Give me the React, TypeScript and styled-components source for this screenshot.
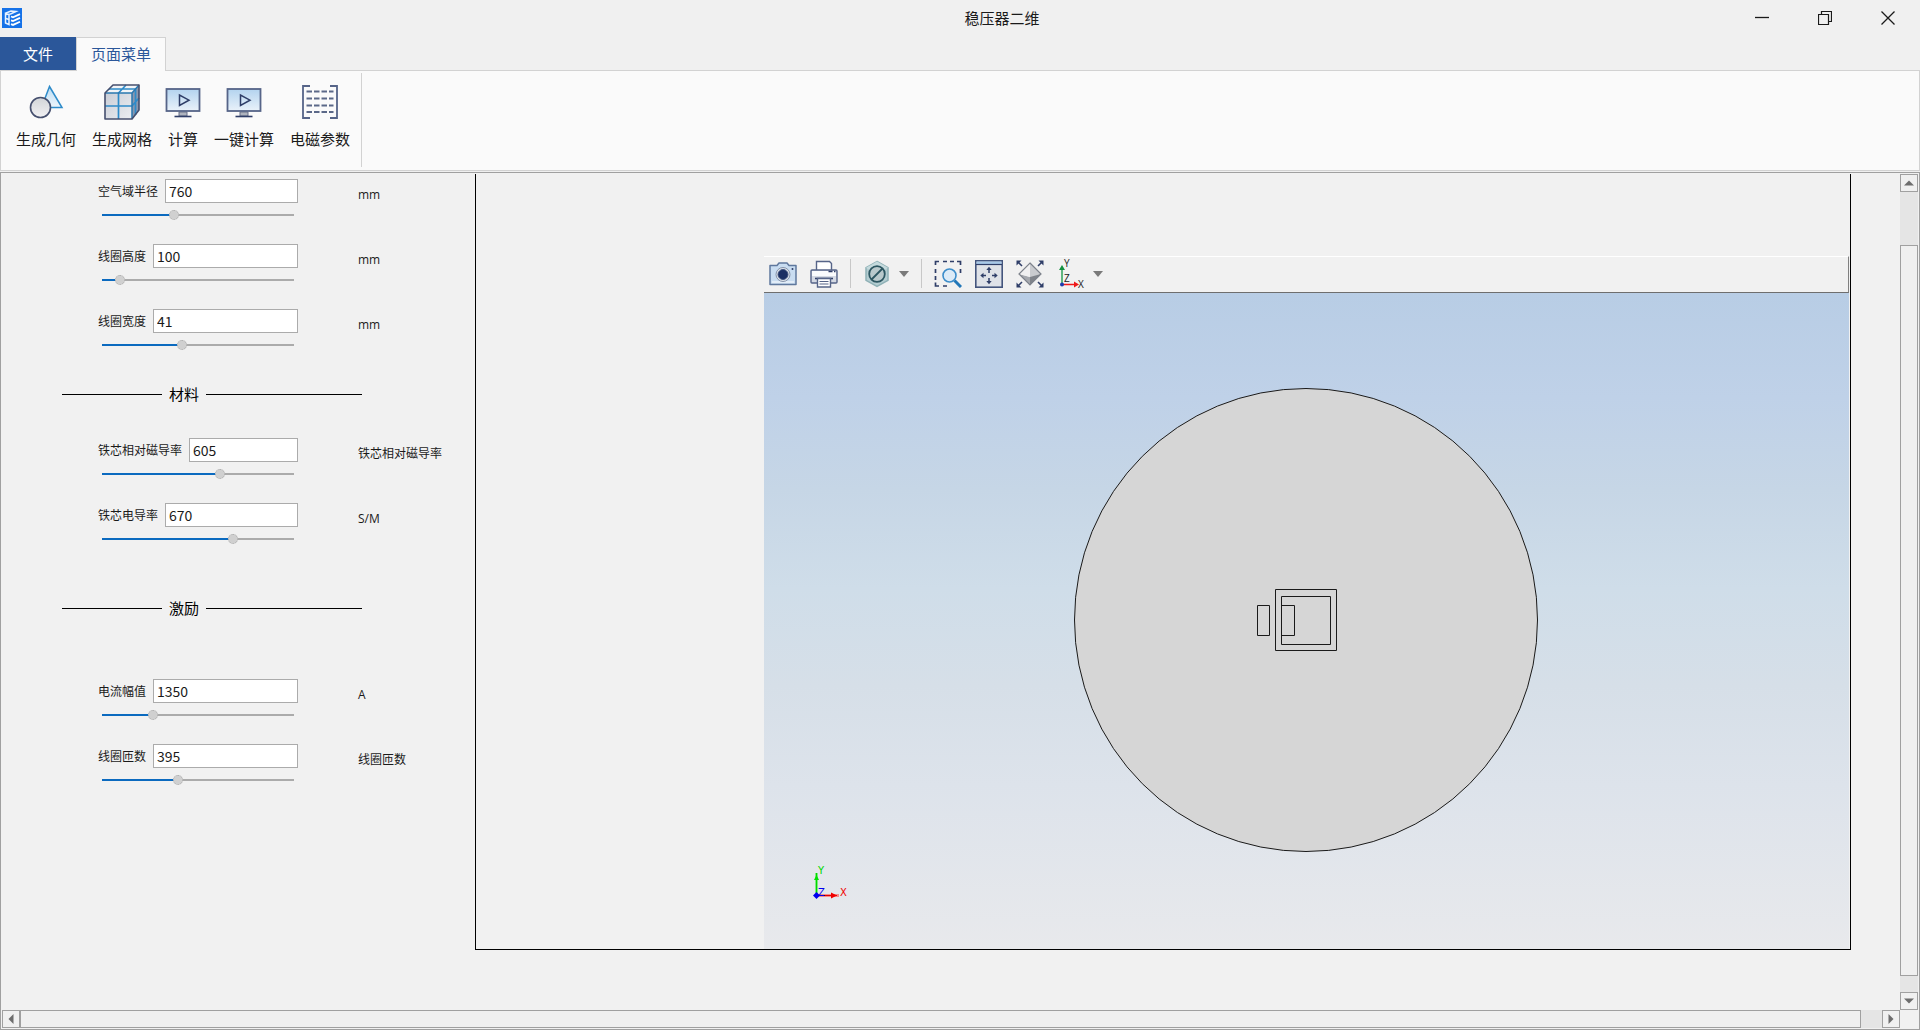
import React, { useState } from "react";
import styled, { createGlobalStyle } from "styled-components";

const uiFont = `"Noto Sans", "Noto Sans CJK SC", sans-serif`;
const cjkFont = `"Noto Sans CJK SC", sans-serif`;

const GlobalStyle = createGlobalStyle`
  * { box-sizing: border-box; }
  body { margin: 0; background: #f0f0f0; color: #1a1a1a; font: 12px/16px ${uiFont}; }
  button { margin: 0; padding: 0; border: 0; background: none; color: inherit; font: inherit; }
  svg { display: block; }
`;

const Window = styled.div`
  display: flex;
  flex-direction: column;
  min-height: 100vh;
`;

/* ---------- title bar ---------- */
const TitleBar = styled.header`
  display: grid;
  grid-template-columns: 274px 1fr 190px;
  align-items: center;
  height: 37px;
  padding-bottom: 1px;
`;
const AppIcon = styled.span`
  padding-left: 2px;
`;
const Title = styled.h1`
  margin: 0;
  padding-bottom: 1px;
  text-align: center;
  font: 400 15px/20px ${cjkFont};
`;
const WindowControls = styled.div`
  display: flex;
  padding-right: 1px;
`;
const WindowButton = styled.button`
  display: grid;
  place-items: center;
  flex: 1;
  height: 36px;
`;

/* ---------- tabs and ribbon ---------- */
const Tabs = styled.nav`
  display: flex;
  height: 33px;
`;
const Tab = styled.button<{ $kind: "file" | "page" }>`
  position: relative;
  z-index: 1;
  padding-bottom: ${(p) => (p.$kind === "file" ? 0 : 2)}px;
  font: 15px/20px ${cjkFont};
  width: ${(p) => (p.$kind === "file" ? 76 : 90)}px;
  height: ${(p) => (p.$kind === "file" ? 33 : 34)}px;
  background: ${(p) => (p.$kind === "file" ? "#2b579a" : "#fafafa")};
  color: ${(p) => (p.$kind === "file" ? "#ffffff" : "#2b579a")};
  border: ${(p) => (p.$kind === "file" ? "0" : "1px solid #d2d2d2")};
  border-bottom: 0;
`;
const Ribbon = styled.div`
  display: flex;
  height: 101px;
  background: #fafafa;
  border: 1px solid #d2d2d2;
`;
const RibbonGroup = styled.div`
  display: flex;
  align-items: flex-start;
  margin: 2px 0 3px;
  padding: 11px 3px 0 7px;
  border-right: 1px solid #d2d2d2;
`;
const RibbonButton = styled.button`
  display: flex;
  flex-direction: column;
  align-items: center;
  gap: 9px;
  padding: 0 8px;
  font: 15px/20px ${cjkFont};
  white-space: nowrap;
  svg {
    margin: 0 -3px;
  }
`;

/* ---------- work area ---------- */
const WorkArea = styled.main`
  display: grid;
  grid-template-columns: 1fr 18px;
  grid-template-rows: 1fr 18px;
  flex: 1;
  margin-top: 1px;
  padding: 1px;
  background: #f1f1f1;
  border: 1px solid #a0a0a0;
`;
const Page = styled.div`
  display: flex;
`;
const Parameters = styled.form`
  width: 473px;
  padding: 5px 0 0 60px;
`;
const Rows = styled.div`
  display: flex;
  flex-direction: column;
  gap: 24px;
  padding-left: 36px;
`;
const Row = styled.div`
  display: flex;
  gap: 60px;
`;
const Control = styled.div`
  width: 200px;
`;
const Field = styled.div`
  display: flex;
  align-items: center;
  gap: 7px;
  height: 24px;
`;
const Label = styled.label`
  font: 12px/16px ${cjkFont};
  white-space: nowrap;
`;
const TextInput = styled.input`
  flex: 1;
  min-width: 0;
  height: 24px;
  padding: 0 3px;
  background: #fff;
  border: 1px solid #ababab;
  border-radius: 0;
  color: #1a1a1a;
  font: 14px/20px ${cjkFont};
`;
const Slider = styled.input`
  display: block;
  appearance: none;
  width: 192px;
  height: 10px;
  margin: 7px 4px 0;
  background: transparent;
  &::-webkit-slider-runnable-track {
    height: 2px;
    background: linear-gradient(to right, #0b6abf var(--fill), #ababab var(--fill));
  }
  &::-webkit-slider-thumb {
    appearance: none;
    width: 10px;
    height: 10px;
    margin-top: -4px;
    background: #d0d0d0;
    border: 1px dotted #ababab;
    border-radius: 50%;
  }
`;
const Unit = styled.span`
  padding-top: 8px;
  font: 12px/16px "Open Sans", ${cjkFont};
`;
const Divider = styled.h2<{ $before: number; $after: number }>`
  display: flex;
  align-items: center;
  gap: 7px;
  width: 300px;
  margin: ${(p) => p.$before}px 0 ${(p) => p.$after}px;
  color: #000;
  font: 400 15px/20px ${cjkFont};
  &::before,
  &::after {
    content: "";
    height: 1px;
    background: #000;
  }
  &::before {
    width: 100px;
  }
  &::after {
    flex: 1;
  }
`;

/* ---------- graphics panel ---------- */
const GraphicsPanel = styled.section`
  display: flex;
  flex-direction: column;
  flex: 1;
  margin: 0 49px 60px 0;
  padding: 82px 1px 0 288px;
  border: solid #000;
  border-width: 0 1px 1px;
`;
const Toolbar = styled.div`
  display: flex;
  align-items: center;
  gap: 13px;
  height: 37px;
  padding: 0 0 2px 5px;
  border-top: 1px solid #fff;
  border-right: 1px solid #808080;
  border-bottom: 1px solid #6e6e6e;
`;
const ToolGroup = styled.div`
  display: flex;
  align-items: center;
  gap: 8px;
`;
const ToolSeparator = styled.span`
  width: 1px;
  height: 29px;
  margin: 0 -1px;
  background: #c8c8c8;
`;
const Viewport = styled.div`
  position: relative;
  display: grid;
  place-items: center;
  flex: 1;
  background: linear-gradient(#b8cde5, #bfd1e8 16%, #c6d6e6 30%, #cfdde9 45%, #d6dfe8 60%, #dde3eb 75%, #e8e9ec);
`;
const AxisTriad = styled.svg`
  position: absolute;
  left: 48px;
  bottom: 46px;
`;

/* ---------- scroll bars ---------- */
const ScrollBar = styled.div<{ $vertical?: boolean }>`
  display: flex;
  flex-direction: ${(p) => (p.$vertical ? "column" : "row")};
  background: #e5e5e5;
`;
const ScrollButton = styled.button`
  display: grid;
  place-items: center;
  width: 18px;
  height: 18px;
  background: #f0f0f0;
  border: 1px solid #a0a0a0;
`;
const ScrollThumb = styled.div<{ $vertical?: boolean }>`
  flex: 1;
  margin: ${(p) => (p.$vertical ? "53px 0 16px" : "0 21px 0 0")};
  background: #f0f0f0;
  border: 1px solid #a0a0a0;
`;

/* ---------- drawings ---------- */
const navy = "#2f3e68";

const GeometryIcon = () => (
  <svg width="36" height="36" viewBox="0 0 36 36">
    <defs>
      <linearGradient id="geoTri" x1="0" y1="0" x2="0" y2="1">
        <stop offset="0" stopColor="#b9dcf3" />
        <stop offset="1" stopColor="#eef5fb" />
      </linearGradient>
      <linearGradient id="geoCircle" x1="0" y1="0" x2="0" y2="1">
        <stop offset="0" stopColor="#d2d4d8" />
        <stop offset="1" stopColor="#f1f1f3" />
      </linearGradient>
    </defs>
    <path d="M21.5 2.5 34 23.5H13.5Z" fill="url(#geoTri)" stroke="#2e8bc9" strokeWidth="1.5" />
    <circle cx="12.5" cy="23.5" r="10" fill="url(#geoCircle)" stroke="#454f6e" strokeWidth="1.6" />
  </svg>
);

const MeshIcon = () => (
  <svg width="36" height="36" viewBox="0 0 36 36">
    <defs>
      <linearGradient id="meshFront" x1="0" y1="0" x2="1" y2="1">
        <stop offset="0" stopColor="#c9cdd6" />
        <stop offset="1" stopColor="#eceef2" />
      </linearGradient>
    </defs>
    <path d="M1 9 9 1H35L28 9Z" fill="#f2f4f7" />
    <path d="M28 9 35 1V26L28 35Z" fill="#8a97ae" />
    <path d="M1 9H28V35H1Z" fill="url(#meshFront)" />
    <path d="M14.5 35V9L22 1M1 22H28L35 14M5 5H31.5V31" fill="none" stroke="#2e8bc9" strokeWidth="1.7" />
    <path d="M1 9H28V35M28 9 35 1" fill="none" stroke="#2a78b0" strokeWidth="1.5" />
    <path d="M1 35V9L9 1H35V26L28 35Z" fill="none" stroke="#454f6e" strokeWidth="1.6" strokeLinejoin="round" />
  </svg>
);

const ComputeIcon = ({ id }: { id: string }) => (
  <svg width="36" height="36" viewBox="0 0 36 36">
    <defs>
      <linearGradient id={id} x1="0" y1="0" x2="0" y2="1">
        <stop offset="0" stopColor="#b3d3ef" />
        <stop offset="1" stopColor="#eaf2fa" />
      </linearGradient>
    </defs>
    <path d="M14 28h8v4h-8Z" fill="#aeb3bd" stroke="#68718a" />
    <rect x="1.5" y="5" width="33" height="22" fill={`url(#${id})`} stroke="#566488" strokeWidth="1.8" />
    <path d="M14.5 11v10.5L24 16.2Z" fill="none" stroke={navy} strokeWidth="1.5" />
    <path d="M9.5 32.5h17" stroke={navy} strokeWidth="1.6" />
  </svg>
);

const MatrixIcon = () => (
  <svg width="38" height="36" viewBox="0 0 38 36">
    <path d="M9 2H2v32h7M29 2h7v32h-7" fill="none" stroke="#566488" strokeWidth="1.8" />
    <path d="M5.5 7.5h27M5.5 14.5h27M5.5 21.5h27M5.5 28h27" stroke="#5b6888" strokeWidth="1.8" strokeDasharray="5.5 2" />
  </svg>
);

const LogoIcon = () => (
  <svg width="20" height="20" viewBox="0 0 20 20" aria-hidden="true">
    <path d="M0 0h20v20H0Z" fill="#1672e8" />
    <path d="M2.8 5.5 9 3l5 .5L8.500 6 3.500 6.500V15L7 16.500V6.500" fill="none" stroke="#e8f2ff" strokeWidth="1.5" />
    <path d="M4 10.5 7 11.5" stroke="#e8f2ff" strokeWidth="1.4" />
    <path d="m9 8.5 2 .8 7-3.200M9 12.300l2 .8 7-3.200M9 16.100l2 .8 7-3.200" fill="none" stroke="#fff" strokeWidth="1.8" />
  </svg>
);

const Svg28 = ({ children }: { children: React.ReactNode }) => (
  <svg width="28" height="28" viewBox="0 0 28 28" fill="none">{children}</svg>
);

const CameraIcon = () => (
  <Svg28>
    <path d="M1 5.5h7L10 3h8l2 2.500h7V24.500H1Z" fill="#c9ddf1" stroke="#5f789d" strokeWidth="1.5" strokeLinejoin="round" />
    <path d="M3 21h22v2H3Z" fill="#e2edf8" />
    <circle cx="14" cy="14.5" r="7" fill="#dfe5ec" stroke="#8593aa" />
    <circle cx="14" cy="14.5" r="5" fill="#1b2f63" stroke="#42557f" />
    <circle cx="23.5" cy="9" r="1" fill={navy} />
  </Svg28>
);

const PrinterIcon = () => (
  <Svg28>
    <path d="M6.5 11V1.500h13l2 2V11" fill="#fff" stroke="#566488" strokeWidth="1.4" />
    <rect x="1" y="10" width="26" height="13" rx="1" fill="#d5dae4" stroke="#566488" strokeWidth="1.4" />
    <path d="M2 11h24v5H2Z" fill="#fafbfd" />
    <path d="M18.5 11.5h4M24 11.5h1.500" stroke={navy} strokeWidth="1.4" />
    <path d="M5 18.5h18" stroke={navy} strokeWidth="1.6" />
    <path d="M7.5 18.5h13v8.500h-13Z" fill="#fff" stroke="#566488" strokeWidth="1.4" />
    <path d="M9.5 21.5h9M9.500 24h9" stroke="#566488" strokeWidth="1.2" />
  </Svg28>
);

const HideIcon = () => (
  <Svg28>
    <path d="m14 1.500 11 6.200v12.600L14 26.500 3 20.300V7.700Z" fill="#b4cdd1" stroke="#8fb1b6" strokeWidth="1.5" />
    <path d="m14 1.500 11 6.200L14 14 3 7.700Z" fill="#c5dadd" />
    <circle cx="14" cy="14" r="7.8" fill="#b9c9cc" stroke="#2c5661" strokeWidth="1.8" />
    <path d="m8.500 19.500 11-11" stroke="#2c5661" strokeWidth="1.8" />
  </Svg28>
);

const ZoomBoxIcon = () => (
  <Svg28>
    <path d="M1.500 5V1.500H5M9 1.500h4M16 1.500h4M23 1.500h3.500V5M1.500 9v4M1.500 16v4M1.500 22.500V26H5M9 26h4M26.500 9v4" stroke={navy} strokeWidth="1.7" />
    <path d="m20.500 20.500 6.500 6.500" stroke="#2277b8" strokeWidth="3" />
    <circle cx="15.5" cy="15.5" r="6.5" fill="#dcebf7" stroke="#3c8dca" strokeWidth="1.6" />
  </Svg28>
);

const FitIcon = () => (
  <Svg28>
    <rect x=".8" y=".8" width="26.4" height="26.4" fill="#dfe2e8" stroke="#44557d" strokeWidth="1.6" />
    <path d="M1.500 1.500h25v2.500h-25Z" fill="#a9c9e8" />
    <path d="M1 4.500h26" stroke={navy} strokeWidth="1.2" />
    <path d="M14 9v4M14 18v4M7 15.500h4M17 15.500h4" stroke={navy} strokeWidth="1.5" />
    <path d="m11.300 10 2.700-3.200 2.700 3.200ZM11.300 21l2.700 3.200 2.700-3.200ZM8.500 12.800l-3.200 2.700 3.200 2.700ZM19.500 12.800l3.200 2.700-3.200 2.700Z" fill={navy} />
  </Svg28>
);

const ExtentsIcon = () => (
  <Svg28>
    <path d="M14 3 25 14H3Z" fill="#f2f2f2" />
    <path d="M14 3v22l11-11Z" fill="#c9cbcf" />
    <path d="M3 14 14 17v8Z" fill="#a5a8ae" />
    <path d="m25 14-11 3v8Z" fill="#7f838a" />
    <path d="m3 14 11 3V3Z" fill="#f0f0f1" />
    <path d="m14 3 11 11-11 11L3 14Z" stroke="#7d828b" strokeWidth="1.2" />
    <path d="m2 2 4 4M26 2l-4 4M2 26l4-4M26 26l-4-4" stroke={navy} strokeWidth="1.6" />
    <path d="M.5.5h5l-5 5ZM27.500.5v5l-5-5ZM.5 27.500v-5l5 5ZM27.500 27.500h-5l5-5Z" fill={navy} />
  </Svg28>
);

const AxisText = styled.text`
  font: 10px "Open Sans", sans-serif;
`;

const ViewAxesIcon = () => (
  <svg width="28" height="32" viewBox="0 0 28 32" overflow="visible">
    <path d="M5 27V12" stroke="#2da05a" strokeWidth="1.5" />
    <path d="m2 12 3-5 3 5Z" fill="#15903f" />
    <path d="M5 26.500h13" stroke="#f01818" strokeWidth="1.5" />
    <path d="m17 23.500 5 3-5 3Z" fill="#f01818" />
    <circle cx="5" cy="26.5" r="2" fill="#1e3cae" />
    <AxisText x="7" y="9" fill="#222">Y</AxisText>
    <AxisText x="7" y="24" fill="#222">Z</AxisText>
    <AxisText x="21" y="30" fill="#222">X</AxisText>
  </svg>
);

const DropArrow = () => (
  <svg width="10" height="6" viewBox="0 0 10 6"><path d="M0 0h10L5 6Z" fill="#7a7a7a" /></svg>
);

const TriadText = styled.text`
  font: 10px "DejaVu Sans", sans-serif;
`;

const Arrow = ({ turn }: { turn: number }) => (
  <svg width="10" height="10" viewBox="0 0 10 10">
    <path d="M0 7.500 5 2.500l5 5Z" fill="#6d6d6d" transform={`rotate(${turn} 5 5)`} />
  </svg>
);

/* ---------- data ---------- */
type Parameter = { id: string; label: string; value: string; position: number; unit: string };

const geometry: Parameter[] = [
  { id: "air", label: "空气域半径", value: "760", position: 37, unit: "mm" },
  { id: "coil-height", label: "线圈高度", value: "100", position: 7, unit: "mm" },
  { id: "coil-width", label: "线圈宽度", value: "41", position: 41, unit: "mm" },
];
const material: Parameter[] = [
  { id: "permeability", label: "铁芯相对磁导率", value: "605", position: 62, unit: "铁芯相对磁导率" },
  { id: "conductivity", label: "铁芯电导率", value: "670", position: 69, unit: "S/M" },
];
const excitation: Parameter[] = [
  { id: "current", label: "电流幅值", value: "1350", position: 25, unit: "A" },
  { id: "turns", label: "线圈匝数", value: "395", position: 39, unit: "线圈匝数" },
];
const ribbonItems = [
  { label: "生成几何", icon: <GeometryIcon /> },
  { label: "生成网格", icon: <MeshIcon /> },
  { label: "计算", icon: <ComputeIcon id="screenA" /> },
  { label: "一键计算", icon: <ComputeIcon id="screenB" /> },
  { label: "电磁参数", icon: <MatrixIcon /> },
];

function ParameterRow({ item }: { item: Parameter }) {
  const [value, setValue] = useState(item.value);
  const [position, setPosition] = useState(item.position);
  return (
    <Row>
      <Control>
        <Field>
          <Label htmlFor={item.id}>{item.label}</Label>
          <TextInput id={item.id} value={value} onChange={(e) => setValue(e.target.value)} />
        </Field>
        <Slider
          type="range"
          aria-label={item.label}
          min={0}
          max={100}
          value={position}
          onChange={(e) => setPosition(Number(e.target.value))}
          style={{ "--fill": `${position}%` } as React.CSSProperties}
        />
      </Control>
      <Unit>{item.unit}</Unit>
    </Row>
  );
}

const ParameterRows = ({ items }: { items: Parameter[] }) => (
  <Rows>{items.map((item) => <ParameterRow key={item.id} item={item} />)}</Rows>
);

export default function App() {
  return (
    <Window>
      <GlobalStyle />
      <TitleBar>
        <AppIcon><LogoIcon /></AppIcon>
        <Title>稳压器二维</Title>
        <WindowControls>
          <WindowButton aria-label="最小化">
            <svg width="14" height="14" viewBox="0 0 14 14"><path d="M0 6.500h14" stroke="#1a1a1a" strokeWidth="1.3" /></svg>
          </WindowButton>
          <WindowButton aria-label="还原">
            <svg width="14" height="14" viewBox="0 0 14 14" fill="none" stroke="#1a1a1a">
              <path d="M.5 3.500h10v10H.5ZM3.500 3.500v-3h10v10h-3" strokeWidth="1.2" />
            </svg>
          </WindowButton>
          <WindowButton aria-label="关闭">
            <svg width="14" height="14" viewBox="0 0 14 14"><path d="m.5.5 13 13m0-13-13 13" stroke="#1a1a1a" strokeWidth="1.3" /></svg>
          </WindowButton>
        </WindowControls>
      </TitleBar>
      <Tabs>
        <Tab $kind="file">文件</Tab>
        <Tab $kind="page">页面菜单</Tab>
      </Tabs>
      <Ribbon>
        <RibbonGroup>
          {ribbonItems.map((item) => (
            <RibbonButton key={item.label}>
              {item.icon}
              {item.label}
            </RibbonButton>
          ))}
        </RibbonGroup>
      </Ribbon>
      <WorkArea>
        <Page>
          <Parameters>
            <ParameterRows items={geometry} />
            <Divider $before={34} $after={34}>材料</Divider>
            <ParameterRows items={material} />
            <Divider $before={54} $after={61}>激励</Divider>
            <ParameterRows items={excitation} />
          </Parameters>
          <GraphicsPanel>
            <Toolbar>
              <button aria-label="截图"><CameraIcon /></button>
              <button aria-label="打印"><PrinterIcon /></button>
              <ToolSeparator />
              <ToolGroup>
                <button aria-label="隐藏"><HideIcon /></button>
                <button aria-label="隐藏选项"><DropArrow /></button>
              </ToolGroup>
              <ToolSeparator />
              <button aria-label="框选缩放"><ZoomBoxIcon /></button>
              <button aria-label="适应窗口"><FitIcon /></button>
              <button aria-label="缩放到范围"><ExtentsIcon /></button>
              <ToolGroup>
                <button aria-label="视图方向"><ViewAxesIcon /></button>
                <button aria-label="视图方向选项"><DropArrow /></button>
              </ToolGroup>
            </Toolbar>
            <Viewport>
              <svg width="466" height="466" viewBox="1 1 466 466" fill="none" stroke="#1a1a1a">
                <circle cx="233" cy="233" r="231.5" fill="#d6d6d6" />
                <path d="M184.500 218.500h12v30h-12ZM202.500 202.500h61v61h-61ZM208.500 209.500h49v48h-49ZM208.500 218.500h13v30h-13Z" />
              </svg>
              <AxisTriad width="40" height="40" viewBox="0 -4 40 40">
                <path d="M4.500 28V6" stroke="#7fe87f" strokeWidth="3" />
                <path d="M4.500 28V6" stroke="#00d800" />
                <path d="m2 13 2.500-5L7 13Z" fill="#00e000" />
                <path d="M5 28.500h22" stroke="#f58a8a" strokeWidth="3" />
                <path d="M5 28.500h20" stroke="#e00000" />
                <path d="m19 25.500 6 3-6 3Z" fill="#f00000" />
                <path d="m4.500 25 3.500 3.500L4.500 32 1 28.500Z" fill="#0000f0" />
                <TriadText x="6" y="7" fill="#00d800">Y</TriadText>
                <TriadText x="6" y="29" fill="#0000f0">Z</TriadText>
                <TriadText x="28" y="29" fill="#f00000">X</TriadText>
              </AxisTriad>
            </Viewport>
          </GraphicsPanel>
        </Page>
        <ScrollBar $vertical>
          <ScrollButton aria-label="向上"><Arrow turn={0} /></ScrollButton>
          <ScrollThumb $vertical />
          <ScrollButton aria-label="向下"><Arrow turn={180} /></ScrollButton>
        </ScrollBar>
        <ScrollBar>
          <ScrollButton aria-label="向左"><Arrow turn={-90} /></ScrollButton>
          <ScrollThumb />
          <ScrollButton aria-label="向右"><Arrow turn={90} /></ScrollButton>
        </ScrollBar>
      </WorkArea>
    </Window>
  );
}
